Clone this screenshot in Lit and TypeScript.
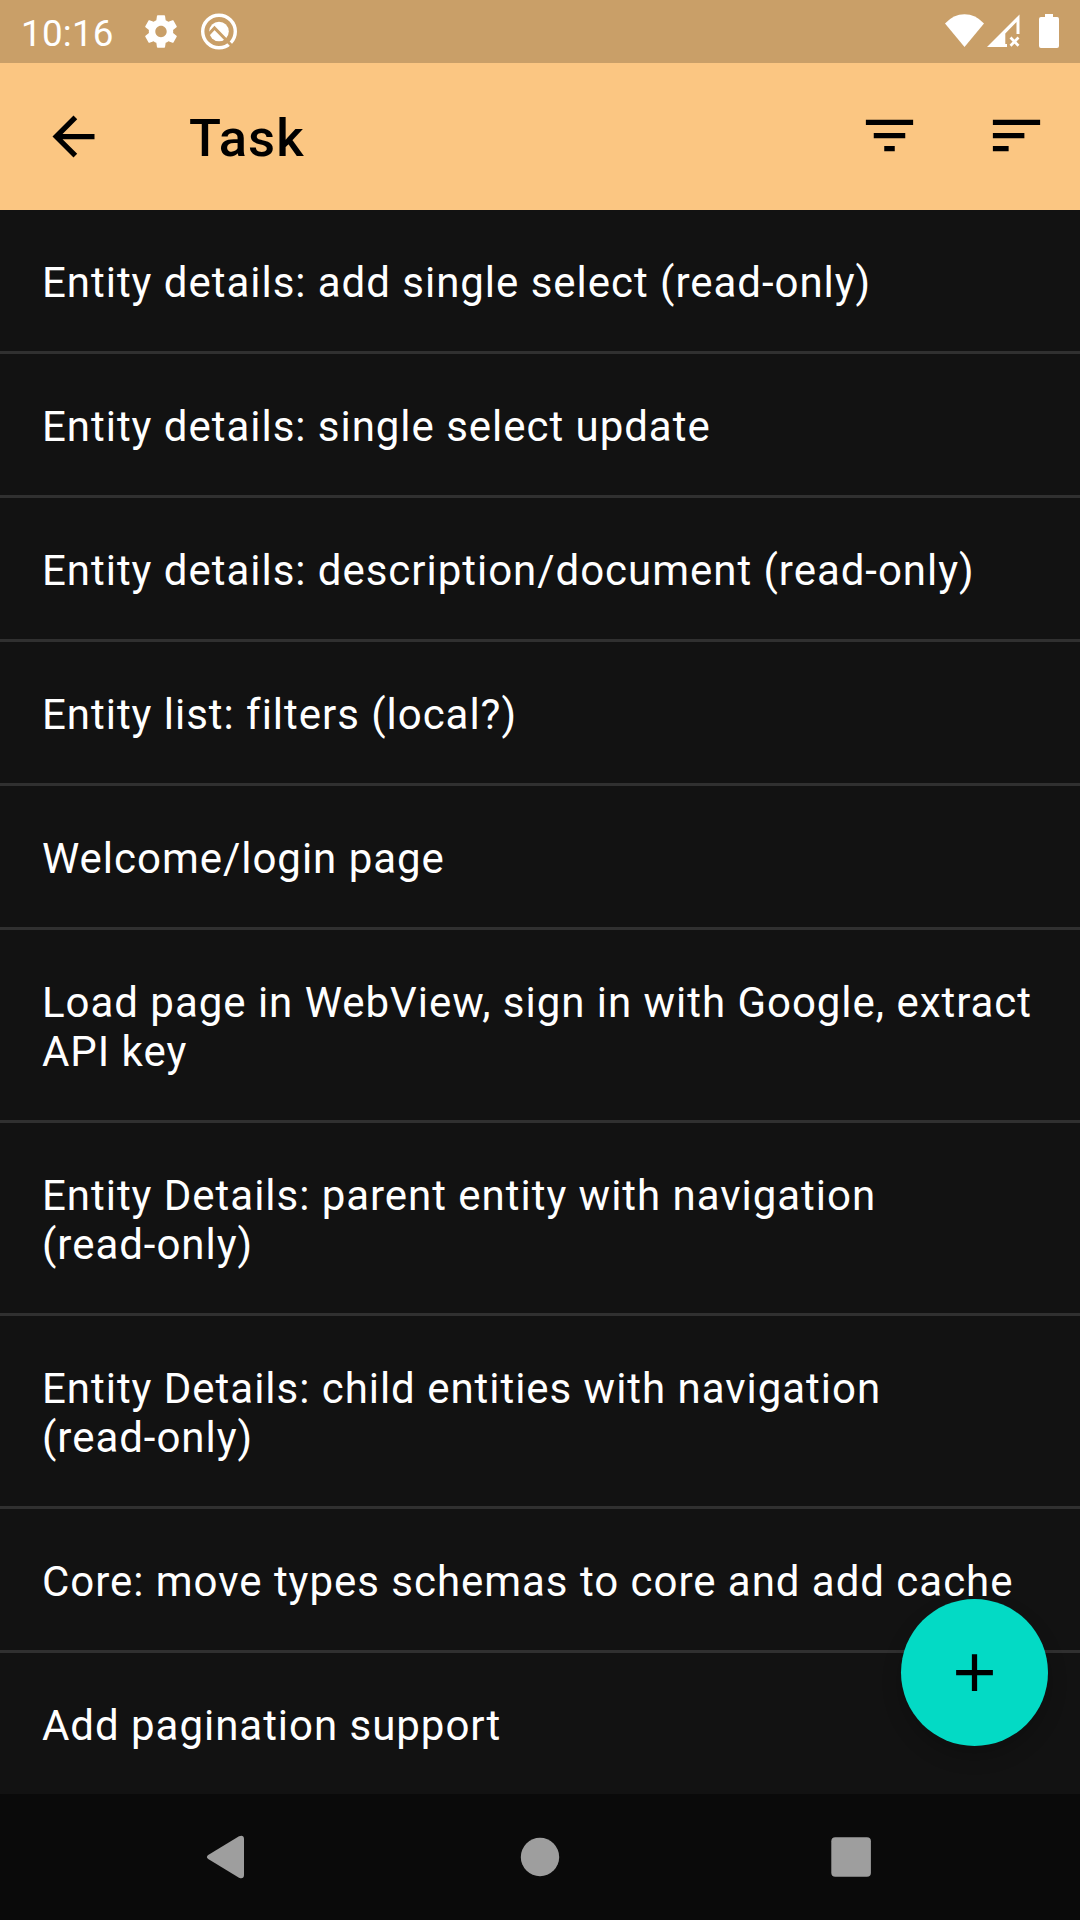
import { LitElement, html, css } from "lit";
import { customElement } from "lit/decorators.js";

const TASKS: string[] = [
  "Entity details: add single select (read-only)",
  "Entity details: single select update",
  "Entity details: description/document (read-only)",
  "Entity list: filters (local?)",
  "Welcome/login page",
  "Load page in WebView, sign in with Google, extract API key",
  "Entity Details: parent entity with navigation (read-only)",
  "Entity Details: child entities with navigation (read-only)",
  "Core: move types schemas to core and add cache",
  "Add pagination support",
];

// Keeps hyphenated words such as "(read-only)" on one line.
const unbrokenWords = (text: string) =>
  text
    .split(/(\S*-\S*)/)
    .map((part) => (part.includes("-") ? html`<span class="word">${part}</span>` : part));

@customElement("status-bar")
export class StatusBar extends LitElement {
  static styles = css`
    :host {
      display: flex;
      align-items: center;
      height: 63px;
      padding: 0 21px;
      box-sizing: border-box;
      background: #c99f68;
      color: #fff;
    }
    .time {
      width: 120px;
      font-size: 36.75px;
      line-height: 45px;
      letter-spacing: 0.25px;
      padding-top: 4px;
    }
    .gear { margin-right: 15px; }
    .spacer { flex: 1; }
    .wifi { margin-right: 3px; }
    .cell { margin-right: 19px; }
    svg { display: block; fill: currentColor; }
  `;
  render() {
    return html`
      <span class="time">10:16</span>
      <svg class="gear" width="40" height="39" viewBox="0 0 24 24">
        <path d="M19.43 12.98c.04-.32.07-.64.07-.98s-.03-.66-.07-.98l2.11-1.65c.19-.15.24-.42.12-.64l-2-3.46c-.12-.22-.39-.3-.61-.22l-2.49 1c-.52-.4-1.08-.73-1.69-.98l-.38-2.65C14.46 2.18 14.25 2 14 2h-4c-.25 0-.46.18-.49.42l-.38 2.65c-.61.25-1.17.59-1.69.98l-2.49-1c-.23-.09-.49 0-.61.22l-2 3.46c-.13.22-.07.49.12.64l2.11 1.65c-.04.32-.07.65-.07.98s.03.66.07.98l-2.11 1.65c-.19.15-.24.42-.12.64l2 3.46c.12.22.39.3.61.22l2.49-1c.52.4 1.08.73 1.69.98l.38 2.65c.03.24.24.42.49.42h4c.25 0 .46-.18.49-.42l.38-2.65c.61-.25 1.17-.59 1.69-.98l2.49 1c.23.09.49 0 .61-.22l2-3.46c.12-.22.07-.49-.12-.64l-2.11-1.65zM12 15.5c-1.93 0-3.5-1.57-3.5-3.5s1.57-3.5 3.5-3.5 3.5 1.57 3.5 3.5-1.57 3.5-3.5 3.5z"/>
      </svg>
      <svg width="46" height="47" viewBox="0 0 46 47">
        <circle cx="23" cy="23.500" r="16.300" fill="none" stroke="#fff" stroke-width="3.400"/>
        <circle cx="23" cy="23.500" r="9.800"/>
        <path d="M12 27L18.500 20L37 39" fill="none" stroke="#c99f68" stroke-width="3"/>
      </svg>
      <span class="spacer"></span>
      <svg class="wifi" width="39" height="35" viewBox="0 0 39 35">
        <path d="M0 9.500Q8.500 0.300 19.500 0.300T39 9.500L19.500 33Z"/>
      </svg>
      <svg class="cell" width="33" height="35" viewBox="0 0 33 35">
        <path d="M0 33L32.500 0.500V20H29.500V8L18.300 19.500V30H20V33Z"/>
        <path d="M23.500 23.500L31.500 31.700M31.500 23.500L23.500 31.700" fill="none" stroke="#fff" stroke-width="2.700"/>
      </svg>
      <svg width="20" height="35" viewBox="0 0 20 35">
        <path d="M6 0H14V3H18.200Q20 3 20 5V32Q20 34 18 34H2Q0 34 0 32V5Q0 3 2 3H6Z"/>
      </svg>
    `;
  }
}

@customElement("app-bar")
export class AppBar extends LitElement {
  static styles = css`
    :host {
      display: flex;
      align-items: center;
      height: 147px;
      padding: 0 32px 0 42px;
      box-sizing: border-box;
      background: #fbc682;
      color: #000;
    }
    .title {
      flex: 1;
      margin: 0 0 0 84px;
      font-size: 52.5px;
      line-height: 62px;
      font-weight: 500;
      letter-spacing: 1.1px;
      padding-top: 3px;
    }
    .actions {
      display: flex;
      gap: 64px;
      padding-bottom: 2px;
    }
    svg { display: block; fill: currentColor; }
  `;
  render() {
    return html`
      <svg width="63" height="63" viewBox="0 0 24 24">
        <path d="M20 11H7.830l5.590-5.590L12 4l-8 8 8 8 1.410-1.410L7.830 13H20v-2z"/>
      </svg>
      <h1 class="title">Task</h1>
      <div class="actions">
        <svg width="63" height="63" viewBox="0 0 24 24">
          <path d="M10 18h4v-2h-4v2zM3 6v2h18V6H3zm3 7h12v-2H6v2z"/>
        </svg>
        <svg width="63" height="63" viewBox="0 0 24 24">
          <path d="M3 18h6v-2H3v2zM3 6v2h18V6H3zm0 7h12v-2H3v2z"/>
        </svg>
      </div>
    `;
  }
}

@customElement("nav-bar")
export class NavBar extends LitElement {
  static styles = css`
    :host {
      display: flex;
      align-items: center;
      justify-content: space-between;
      height: 126px;
      padding: 0 208px 0 206px;
      box-sizing: border-box;
      background: #0a0a0a;
    }
    svg { display: block; fill: #9e9e9e; }
  `;
  render() {
    return html`
      <svg width="43" height="44" viewBox="0 0 43 44">
        <path d="M2.200 20L33 1.300Q37.800 -0.500 38 4V40Q37.800 44.500 33 42.700L2.200 24Q-0.400 22 2.200 20Z"/>
      </svg>
      <svg width="40" height="40" viewBox="0 0 40 40"><circle cx="20" cy="20" r="19.200"/></svg>
      <svg width="41" height="40" viewBox="0 0 41 40"><rect x="0.300" y="0.200" width="39.600" height="39.600" rx="4"/></svg>
    `;
  }
}

@customElement("app-root")
export class AppRoot extends LitElement {
  static styles = css`
    :host {
      display: flex;
      flex-direction: column;
      position: relative;
      width: 1080px;
      height: 1920px;
      overflow: hidden;
      background: #121212;
      color: #fff;
      font-family: Roboto, sans-serif;
    }
    .list {
      flex: 1;
      min-height: 0;
      overflow: hidden;
      margin: 0;
      padding: 0;
      list-style: none;
    }
    .task {
      padding: 48px 42px 44px;
      border-bottom: 3px solid #303030;
      font-size: 42px;
      line-height: 49px;
      letter-spacing: 0.97px;
    }
    .task:last-child { border-bottom-color: transparent; }
    .word { white-space: nowrap; }
    .fab {
      position: absolute;
      right: 32px;
      bottom: 174px;
      width: 147px;
      height: 147px;
      padding: 0;
      border: 0;
      border-radius: 50%;
      display: flex;
      align-items: center;
      justify-content: center;
      background: #03dac5;
      box-shadow: 0 10px 20px rgba(0, 0, 0, 0.2);
    }
  `;
  render() {
    return html`
      <status-bar></status-bar>
      <app-bar></app-bar>
      <ul class="list">
        ${TASKS.map((task) => html`<li class="task">${unbrokenWords(task)}</li>`)}
      </ul>
      <nav-bar></nav-bar>
      <button class="fab" aria-label="Add">
        <svg width="63" height="63" viewBox="0 0 24 24">
          <path d="M19 13h-6v6h-2v-6H5v-2h6V5h2v6h6v2z"/>
        </svg>
      </button>
    `;
  }
}
